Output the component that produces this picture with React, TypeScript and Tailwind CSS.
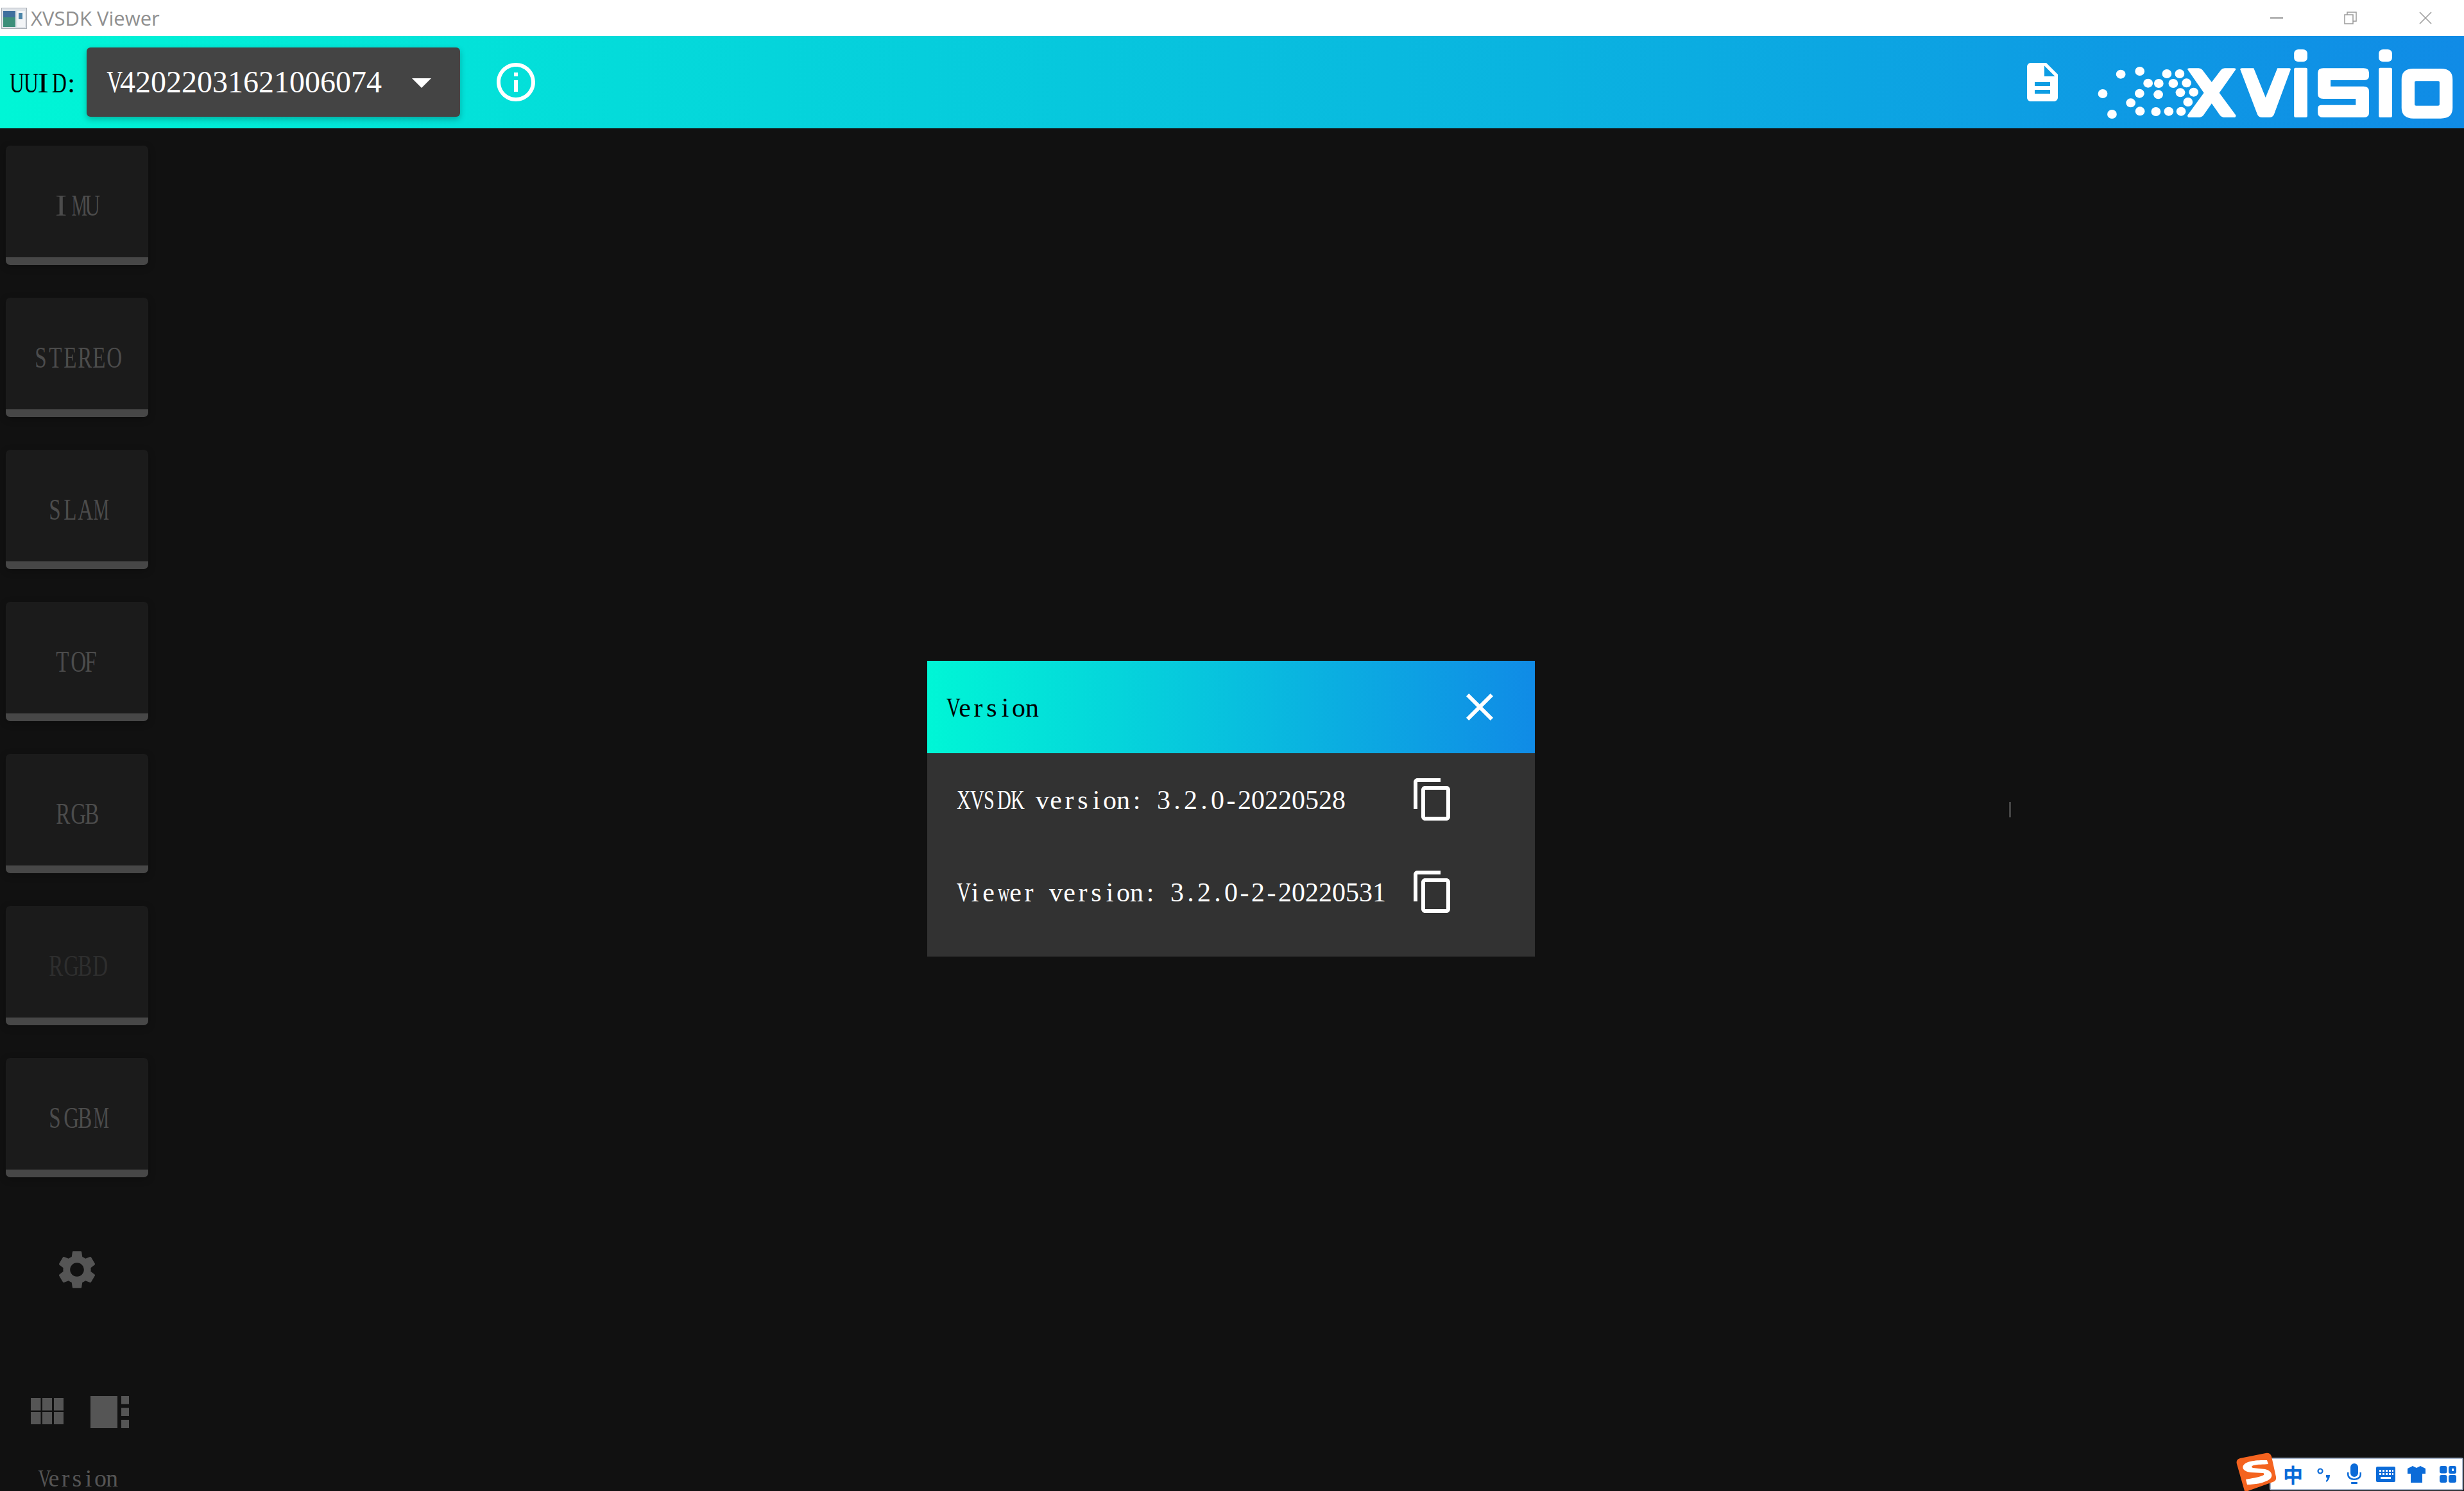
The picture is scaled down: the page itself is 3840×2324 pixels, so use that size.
const SERIF = 'font-["Liberation_Serif",serif]';

// the app's font is a half-width serif, squeeze the wide capitals into their cell
const glyphScale = (ch: string) => {
  if (ch === 'I') return 'scale-x-[1.2]';
  if (ch === 'M' || ch === 'w') return 'scale-x-[0.6]';
  if (/[A-Z]/.test(ch)) return 'scale-x-[0.72]';
  return '';
};

const Mono = ({ text, cell }: { text: string; cell: string }) => (
  <span className={`${SERIF} inline-flex whitespace-pre`}>
    {text.split('').map((ch, i) => (
      <span key={i} className={`${cell} inline-block shrink-0 text-center ${glyphScale(ch)}`}>
        {ch}
      </span>
    ))}
  </span>
);

const Md = ({ d, className }: { d: string; className: string }) => (
  <svg viewBox="0 0 24 24" className={className} fill="currentColor">
    <path d={d} />
  </svg>
);

const ICON = {
  info: 'M11 7h2v2h-2zm0 4h2v6h-2zm1-9C6.48 2 2 6.48 2 12s4.48 10 10 10 10-4.48 10-10S17.52 2 12 2zm0 18c-4.41 0-8-3.59-8-8s3.59-8 8-8 8 3.59 8 8-3.59 8-8 8z',
  drop: 'M7 10l5 5 5-5z',
  doc: 'M14 2H6c-1.1 0-1.99.9-1.99 2L4 20c0 1.1.89 2 1.99 2H18c1.1 0 2-.9 2-2V8l-6-6zm2 16H8v-2h8v2zm0-4H8v-2h8v2zm-3-5V3.5L18.5 9H13z',
  close: 'M19 6.41 17.59 5 12 10.59 6.41 5 5 6.41 10.59 12 5 17.59 6.41 19 12 13.41 17.59 19 19 17.59 13.41 12z',
  copy: 'M16 1H4c-1.1 0-2 .9-2 2v14h2V3h12V1zm3 4H8c-1.1 0-2 .9-2 2v14c0 1.1.9 2 2 2h11c1.1 0 2-.9 2-2V7c0-1.1-.9-2-2-2zm0 16H8V7h11v14z',
  gear: 'M19.14 12.94c.04-.3.06-.61.06-.94 0-.32-.02-.64-.07-.94l2.03-1.58c.18-.14.23-.41.12-.61l-1.92-3.32c-.12-.22-.37-.29-.59-.22l-2.39.96c-.5-.38-1.03-.7-1.62-.94l-.36-2.54c-.04-.24-.24-.41-.48-.41h-3.84c-.24 0-.43.17-.47.41l-.36 2.54c-.59.24-1.13.57-1.62.94l-2.39-.96c-.22-.08-.47 0-.59.22L2.74 8.87c-.12.21-.08.47.12.61l2.03 1.58c-.05.3-.09.63-.09.94s.02.64.07.94l-2.03 1.58c-.18.14-.23.41-.12.61l1.92 3.32c.12.22.37.29.59.22l2.39-.96c.5.38 1.03.7 1.62.94l.36 2.54c.05.24.24.41.48.41h3.84c.24 0 .44-.17.47-.41l.36-2.54c.59-.24 1.13-.56 1.62-.94l2.39.96c.22.08.47 0 .59-.22l1.92-3.32c.12-.22.07-.47-.12-.61l-2.01-1.58zM12 15.6c-1.98 0-3.6-1.62-3.6-3.6s1.62-3.6 3.6-3.6 3.6 1.62 3.6 3.6-1.62 3.6-3.6 3.6z',
};

const DOTS = [
  [122, 188], [202, 174], [316, 186], [370, 186], [237, 230], [282, 231], [343, 231], [399, 229],
  [46, 279], [201, 278], [280, 283], [373, 274], [429, 272], [164, 322], [405, 318], [85, 375],
  [203, 361], [270, 363], [324, 362], [376, 362],
];

const Logo = () => (
  <svg viewBox="0 0 1568 450" preserveAspectRatio="none" className="h-[150px] w-[580px] shrink-0" fill="#fff">
    {DOTS.map(([x, y]) => (
      <ellipse key={`${x}-${y}`} cx={x} cy={y} rx="20" ry="21" />
    ))}
    <path d="M403 165Q403 160 410 160H450Q460 160 466 168L505 225L544 168Q550 160 560 160H600Q607 160 607 165L537 275L607 380Q607 390 600 390H562Q548 390 540 380L505 325L470 380Q462 390 448 390H410Q403 390 403 380L472 275Z" />
    <path d="M625 165Q625 160 632 160H682L732 297L782 160H832Q838 160 838 165L768 375Q763 390 748 390H718Q702 390 697 375Z" />
    <rect x="852" y="158" width="56" height="232" rx="6" ry="6" />
    <rect x="852" y="72" width="56" height="58" rx="18" ry="18" />
    <path d="M975 160H1145Q1168 160 1168 182V196Q1168 216 1148 216H1006V245H1145Q1168 245 1168 268V368Q1168 390 1145 390H975Q952 390 952 368V348Q952 332 968 332H1112V303H975Q952 303 952 280V182Q952 160 975 160Z" />
    <rect x="1209" y="158" width="56" height="232" rx="6" ry="6" />
    <rect x="1209" y="72" width="56" height="58" rx="18" ry="18" />
    <path
      fillRule="evenodd"
      d="M1355 162H1470Q1520 162 1520 212V345Q1520 395 1470 395H1355Q1305 395 1305 345V212Q1305 162 1355 162ZM1366 220Q1360 220 1360 226V329Q1360 335 1366 335H1459Q1465 335 1465 329V226Q1465 220 1459 220Z"
    />
  </svg>
);

const TitleBar = () => (
  <div className="flex h-[56px] shrink-0 items-center bg-white">
    <svg viewBox="0 0 40 33" className="ml-[2px] h-[33px] w-[40px] shrink-0">
      <rect x="0.5" y="0.5" width="39" height="32" fill="#dfe3e8" stroke="#a9afb6" />
      <rect x="3" y="5" width="19" height="25" fill="#3d8f7a" />
      <rect x="3" y="5" width="19" height="10" fill="#3f6f9e" />
      <rect x="25" y="5" width="12" height="25" fill="#f2f4f6" />
      <rect x="27" y="8" width="6" height="10" fill="#4b84a8" />
    </svg>
    <span className='ml-[6px] font-["Open_Sans",sans-serif] text-[31px] text-[#8f8f8f]'>XVSDK Viewer</span>
    <div className="ml-auto flex items-center pr-[50px]">
      <div className="h-[2px] w-[20px] bg-[#9a9a9a]" />
      <svg viewBox="0 0 20 20" className="ml-[95px] h-[20px] w-[20px] text-[#9a9a9a]" fill="none" stroke="currentColor" strokeWidth="1.5">
        <rect x="1" y="5" width="13" height="14" />
        <path d="M5 5V1H19V15H14" />
      </svg>
      <svg viewBox="0 0 20 20" className="ml-[97px] h-[20px] w-[20px] text-[#9a9a9a]" fill="none" stroke="currentColor" strokeWidth="1.5">
        <path d="M1 1L19 19M19 1L1 19" />
      </svg>
    </div>
  </div>
);

const Header = () => (
  <div className="flex h-[144px] shrink-0 items-center bg-linear-to-r/srgb from-[#00f6d6] to-[#108be6] pl-[12px]">
    <span className="text-[44px] leading-none text-black">
      <Mono text="UUID:" cell="w-[22px]" />
    </span>
    <div className="ml-[13px] flex h-[108px] w-[582px] items-center rounded-[6px] bg-[#444444] pl-[28px] text-[48px] leading-none text-white shadow-[0_4px_10px_rgba(0,0,0,0.25)]">
      <Mono text="V42022031621006074" cell="w-[24px]" />
      <Md d={ICON.drop} className="ml-[26px] h-[72px] w-[72px] text-white" />
    </div>
    <Md d={ICON.info} className="ml-[51px] h-[72px] w-[72px] text-white" />
    <Md d={ICON.doc} className="ml-auto h-[72px] w-[72px] text-white" />
    <div className="ml-[41px]">
      <Logo />
    </div>
  </div>
);

const SideButton = ({ label, dim }: { label: string; dim?: boolean }) => (
  <div className="flex h-[186px] w-[222px] shrink-0 flex-col overflow-hidden rounded-[7px] bg-[#1b1b1b] shadow-[0_3px_12px_rgba(0,0,0,0.25)]">
    <div className={`flex flex-1 items-center justify-center pr-[4px] pt-[13px] text-[46px] leading-none ${dim ? 'text-[#2e2e2e]' : 'text-[#4c4c4c]'}`}>
      <Mono text={label} cell="w-[22.5px]" />
    </div>
    <div className="h-[12px] bg-[#474747]" />
  </div>
);

const Sidebar = () => (
  <div className="flex w-[240px] shrink-0 flex-col pl-[9px] pt-[27px]">
    <div className="flex flex-col gap-[51px]">
      {['IMU', 'STEREO', 'SLAM', 'TOF', 'RGB'].map((l) => (
        <SideButton key={l} label={l} />
      ))}
      <SideButton label="RGBD" dim />
      <SideButton label="SGBM" />
    </div>
    <Md d={ICON.gear} className="ml-[75px] mt-[108px] h-[72px] w-[72px] text-[#555555]" />
    <div className="ml-[39px] mt-[161px] flex items-start gap-[42px]">
      <svg viewBox="0 0 51 41" className="mt-[3px] h-[41px] w-[51px] shrink-0" fill="#555555">
        <rect x="0" y="0" width="15.5" height="19.5" />
        <rect x="18" y="0" width="15" height="19.5" />
        <rect x="36" y="0" width="15" height="19.5" />
        <rect x="0" y="22" width="15.5" height="19" />
        <rect x="18" y="22" width="15" height="19" />
        <rect x="36" y="22" width="15" height="19" />
      </svg>
      <svg viewBox="0 0 60 50" className="h-[50px] w-[60px] shrink-0" fill="#555555">
        <rect x="0" y="0" width="42" height="50" />
        <rect x="48" y="0" width="12" height="12.5" />
        <rect x="48" y="18.5" width="12" height="12.5" />
        <rect x="48" y="37" width="12" height="13" />
      </svg>
    </div>
    <div className="ml-[48px] mt-[62px] flex h-[32px] items-center text-[38px] leading-[32px] text-[#555555]">
      <Mono text="Version" cell="w-[18px]" />
    </div>
  </div>
);

const VersionRow = ({ text }: { text: string }) => (
  <div className="flex h-[144px] items-center pl-[43px]">
    <div className="w-[709px] text-[42px] leading-none text-white">
      <Mono text={text} cell="w-[21px]" />
    </div>
    <Md d={ICON.copy} className="h-[72px] w-[72px] text-white" />
  </div>
);

const VersionDialog = () => (
  <div className="absolute left-[1445px] top-[1030px] h-[461px] w-[947px] bg-[#323232]">
    <div className="flex h-[144px] items-center bg-linear-to-r/srgb from-[#00f6d6] to-[#108be6] pl-[27px] pr-[50px]">
      <span className="text-[42px] leading-none text-black">
        <Mono text="Version" cell="w-[21px]" />
      </span>
      <Md d={ICON.close} className="ml-auto h-[72px] w-[72px] text-white" />
    </div>
    <VersionRow text="XVSDK version: 3.2.0-20220528" />
    <VersionRow text="Viewer version: 3.2.0-2-20220531" />
  </div>
);

// sogou input method bar, floats over the window
const ImeBar = () => (
  <div className="absolute bottom-0 right-0 h-[60px] w-[357px]">
    <div className="absolute bottom-[1px] right-[1px] flex h-[51px] w-[302px] items-center rounded-[3px] border-2 border-[#a7b6cc] bg-white text-[#0b6bd8]">
      <span className='ml-[19px] font-["Noto_Sans_CJK_SC",sans-serif] text-[31px] font-bold leading-none'>中</span>
      <svg viewBox="0 0 30 30" className="ml-[18px] h-[30px] w-[30px]" fill="currentColor">
        <circle cx="9" cy="10" r="3.5" fill="none" stroke="currentColor" strokeWidth="2.2" />
        <path d="M18 16h6c0 5-2 8-5 11l-1.500-1.500c1.500-1.500 2.500-3.500 2.500-5.500h-2z" />
      </svg>
      <svg viewBox="0 0 30 36" className="ml-[17px] h-[36px] w-[30px]" fill="currentColor">
        <rect x="9" y="1" width="12" height="21" rx="6" />
        <path d="M4 15v3c0 6 5 9 11 9s11-3 11-9v-3h-2.5v3c0 4-4 6.500-8.500 6.500S6.500 22 6.500 18v-3z" />
        <rect x="10" y="30" width="10" height="3" rx="1" />
      </svg>
      <svg viewBox="0 0 30 24" className="ml-[19px] h-[24px] w-[30px]" fill="currentColor">
        <path
          fillRule="evenodd"
          d="M2 0H28Q30 0 30 2V22Q30 24 28 24H2Q0 24 0 22V2Q0 0 2 0ZM5 5V8H8V5ZM10 5V8H13V5ZM15 5V8H18V5ZM20 5V8H23V5ZM25 5V8H27V5ZM5 10V13H8V10ZM10 10V13H13V10ZM15 10V13H18V10ZM20 10V13H23V10ZM25 10V13H27V10ZM7 16V19H23V16Z"
        />
      </svg>
      <svg viewBox="0 0 30 28" className="ml-[18px] h-[28px] w-[30px]" fill="currentColor">
        <path d="M9 1L15 4L21 1L29 5L29 13L24 13L24 27L6 27L6 13L1 13L1 5Z" />
      </svg>
      <svg viewBox="0 0 26 26" className="ml-[21px] h-[26px] w-[26px]" fill="currentColor">
        <rect x="0" y="0" width="11.500" height="11.500" rx="3" />
        <path fillRule="evenodd" d="M17 0H23Q26 0 26 3V9Q26 12 23 12H17Q14 12 14 9V3Q14 0 17 0ZM19 4V8H22V4Z" />
        <rect x="0" y="14" width="11.500" height="12" rx="3" />
        <rect x="14" y="14" width="12" height="12" rx="3" />
      </svg>
    </div>
    <svg viewBox="0 0 66 60" className="absolute left-0 top-0 h-[60px] w-[66px]">
      <path d="M8 9L48 1Q55 0 57 6L64 38Q65 44 59 46L20 60H15L3 18Q1 11 8 9Z" fill="#f4631f" />
      <path
        d="M50 12C38 12 20 12 14 19C9 25 16 30 24 31L44 32C46 33 46 35 43 36C36 39 26 40 17 42L19 50C30 50 46 48 55 41C60 36 57 28 47 26L28 24C25 23 26 21 29 20C36 18 44 19 52 18Z"
        fill="#fff"
      />
    </svg>
  </div>
);

export default function App() {
  return (
    <div className="relative flex h-[2324px] w-[3840px] flex-col overflow-hidden bg-[#111111]">
      <TitleBar />
      <Header />
      <div className="flex min-h-0 flex-1">
        <Sidebar />
      </div>
      <VersionDialog />
      {/* stray caret in the video area */}
      <div className="absolute left-[3131px] top-[1250px] h-[24px] w-[3px] bg-[#444444]" />
      <ImeBar />
    </div>
  );
}
